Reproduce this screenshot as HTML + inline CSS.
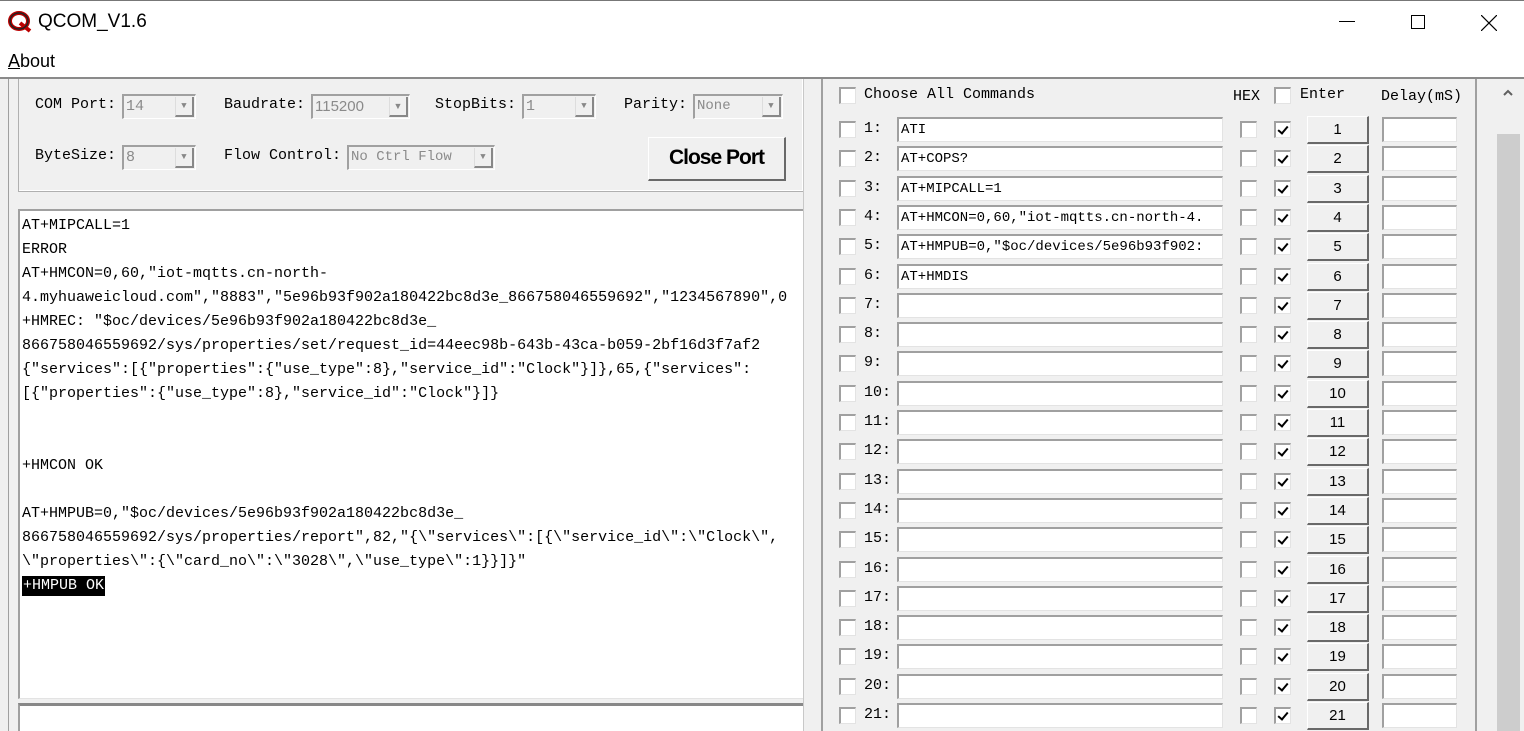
<!DOCTYPE html>
<html><head><meta charset="utf-8"><style>
*{margin:0;padding:0;box-sizing:border-box}
html,body{width:1524px;height:731px;overflow:hidden}
body{background:#f0f0f0;position:relative;font-family:"Liberation Sans",sans-serif}
.abs{position:absolute}
.mono{font-family:"Liberation Mono","Noto Sans CJK SC",monospace}
.sunk{background:#fff;border-top:2px solid #a0a0a0;border-left:2px solid #a0a0a0;border-right:1px solid #e3e3e3;border-bottom:1px solid #e3e3e3}
.cb{position:absolute;width:17px;height:17px;background:#fff;border-top:2px solid #a0a0a0;border-left:2px solid #a0a0a0;border-right:1px solid #e3e3e3;border-bottom:1px solid #e3e3e3}
.ck::after{content:"";position:absolute;left:4px;top:1px;width:4px;height:8px;border-right:2.5px solid #000;border-bottom:2.5px solid #000;transform:rotate(40deg)}
.row{position:absolute;left:0;width:700px;height:25px}
.row .n{position:absolute;left:864px;top:3px;font-size:15px;color:#000}
.row .t{position:absolute;left:897px;top:0;width:326px;height:25px;font-size:14px;line-height:22px;padding-left:2px;white-space:pre;overflow:hidden}
.btn{position:absolute;left:1307px;top:-1px;width:62px;height:28px;background:#f0f0f0;border-top:1px solid #fff;border-left:1px solid #fff;border-right:2px solid #696969;border-bottom:2px solid #696969;text-align:center;font-size:15px;line-height:26px}
.dl{position:absolute;left:1382px;top:0;width:75px;height:25px}
.lbl{position:absolute;font-size:15px;color:#000}
.combo{position:absolute;height:25px;background:#f0f0f0;border-top:2px solid #a0a0a0;border-left:2px solid #a0a0a0;border-right:1px solid #fff;border-bottom:1px solid #fff;color:#8a8a8a;font-size:15px;line-height:21px;padding-left:2px}
.combo i{position:absolute;right:1px;top:1px;width:19px;height:20px;border-left:1px solid #ddd;border-right:2px solid #888;border-bottom:2px solid #888;font-style:normal;font-size:9px;text-align:center;line-height:18px;color:#888}
.log div{position:absolute;left:22px;font-size:15px;white-space:pre;line-height:20px}
</style></head><body>
<div class="abs" style="left:0;top:0;width:1524px;height:77px;background:#fff"></div>
<div class="abs" style="left:0;top:0;width:1524px;height:1px;background:#777"></div>
<svg class="abs" style="left:8px;top:11px" width="26" height="22" viewBox="0 0 26 22"><ellipse cx="11" cy="10" rx="9" ry="8" fill="none" stroke="#b00" stroke-width="4"/><path d="M12 12 L22 20" stroke="#b00" stroke-width="4"/><ellipse cx="11" cy="10" rx="9" ry="8" fill="none" stroke="#222" stroke-width="1.5"/></svg>
<div class="abs" style="left:38px;top:11px;font-size:19px;color:#000">QCOM_V1.6</div>
<div class="abs" style="left:1339px;top:21px;width:16px;height:1px;background:#000"></div>
<div class="abs" style="left:1411px;top:15px;width:14px;height:14px;border:1px solid #000"></div>
<svg class="abs" style="left:1481px;top:15px" width="16" height="16"><path d="M0 0L16 16M16 0L0 16" stroke="#000" stroke-width="1.2"/></svg>
<div class="abs" style="left:8px;top:51px;font-size:18px;color:#000"><u>A</u>bout</div>
<div class="abs" style="left:0;top:77px;width:1524px;height:2px;background:#8a8a8a"></div>
<div class="abs" style="left:18px;top:79px;width:786px;height:113px;border:1px solid #b0b0b0;border-top:none;box-shadow:inset -1px -1px 0 #fff"></div>
<div class="abs" style="left:8px;top:79px;width:1px;height:652px;background:#a0a0a0"></div>
<div class="lbl mono" style="left:35px;top:96px">COM Port:</div>
<div class="combo mono" style="left:122px;top:94px;width:74px">14<i>▼</i></div>
<div class="lbl mono" style="left:224px;top:96px">Baudrate:</div>
<div class="combo" style="left:311px;top:94px;width:99px">115200<i>▼</i></div>
<div class="lbl mono" style="left:435px;top:96px">StopBits:</div>
<div class="combo mono" style="left:522px;top:94px;width:74px">1<i>▼</i></div>
<div class="lbl mono" style="left:624px;top:96px">Parity:</div>
<div class="combo mono" style="left:693px;top:94px;width:90px;font-size:14px">None<i>▼</i></div>
<div class="lbl mono" style="left:35px;top:147px">ByteSize:</div>
<div class="combo mono" style="left:122px;top:145px;width:74px">8<i>▼</i></div>
<div class="lbl mono" style="left:224px;top:147px">Flow Control:</div>
<div class="combo mono" style="left:347px;top:145px;width:148px;font-size:14px">No Ctrl Flow<i>▼</i></div>
<div class="abs" style="left:648px;top:137px;height:44px;width:138px;background:#f0f0f0;border-top:1px solid #fff;border-left:1px solid #fff;border-right:2px solid #696969;border-bottom:2px solid #696969;text-align:center;font-size:21px;line-height:40px;font-weight:bold;letter-spacing:-1px">Close Port</div>
<div class="abs sunk" style="left:18px;top:209px;width:786px;height:490px"></div>
<div class="log mono">
<div style="top:216px">AT+MIPCALL=1</div>
<div style="top:240px">ERROR</div>
<div style="top:264px">AT+HMCON=0,60,"iot-mqtts.cn-north-</div>
<div style="top:288px">4.myhuaweicloud.com","8883","5e96b93f902a180422bc8d3e_866758046559692","1234567890",0</div>
<div style="top:312px">+HMREC: "$oc/devices/5e96b93f902a180422bc8d3e_</div>
<div style="top:336px">866758046559692/sys/properties/set/request_id=44eec98b-643b-43ca-b059-2bf16d3f7af2</div>
<div style="top:360px">{"services":[{"properties":{"use_type":8},"service_id":"Clock"}]},65,{"services":</div>
<div style="top:384px">[{"properties":{"use_type":8},"service_id":"Clock"}]}</div>
<div style="top:456px">+HMCON OK</div>
<div style="top:504px">AT+HMPUB=0,"$oc/devices/5e96b93f902a180422bc8d3e_</div>
<div style="top:528px">866758046559692/sys/properties/report",82,"{\"services\":[{\"service_id\":\"Clock\",</div>
<div style="top:552px">\"properties\":{\"card_no\":\"3028\",\"use_type\":1}}]}"</div>
<div style="top:576px;background:#000;color:#fff;padding:0 1px">+HMPUB OK</div>
</div>
<div class="abs sunk" style="left:18px;top:703px;width:786px;height:28px;border-top:3px solid #888;border-bottom:none"></div>
<div class="abs" style="left:803px;top:79px;width:1px;height:652px;background:#c8c8c8"></div>
<div class="abs" style="left:821px;top:79px;width:2px;height:652px;background:#a0a0a0"></div>
<div class="abs" style="left:1475px;top:79px;width:2px;height:652px;background:#a0a0a0"></div>
<div class="abs" style="left:1477px;top:79px;width:47px;height:652px;background:#f0f0f0"></div>
<div class="abs" style="left:1497px;top:134px;width:23px;height:597px;background:#cdcdcd"></div>
<svg class="abs" style="left:1503px;top:89px" width="10" height="7"><path d="M1 6L5 2L9 6" stroke="#606060" stroke-width="2" fill="none"/></svg>
<div class="cb" style="left:839px;top:87px"></div>
<div class="lbl mono" style="left:864px;top:86px">Choose All Commands</div>
<div class="lbl mono" style="left:1233px;top:88px">HEX</div>
<div class="cb" style="left:1274px;top:87px"></div>
<div class="lbl mono" style="left:1300px;top:86px">Enter</div>
<div class="lbl mono" style="left:1381px;top:88px">Delay(mS)</div>
<div style="position:absolute;left:0;top:0">
<div class="row" style="top:117px"><div class="cb" style="left:839px;top:4px"></div><span class="n mono">1:</span><div class="t sunk mono">ATI</div><div class="cb" style="left:1240px;top:4px"></div><div class="cb ck" style="left:1274px;top:4px"></div><div class="btn">1</div><div class="dl sunk"></div></div>
<div class="row" style="top:146px"><div class="cb" style="left:839px;top:4px"></div><span class="n mono">2:</span><div class="t sunk mono">AT+COPS?</div><div class="cb" style="left:1240px;top:4px"></div><div class="cb ck" style="left:1274px;top:4px"></div><div class="btn">2</div><div class="dl sunk"></div></div>
<div class="row" style="top:176px"><div class="cb" style="left:839px;top:4px"></div><span class="n mono">3:</span><div class="t sunk mono">AT+MIPCALL=1</div><div class="cb" style="left:1240px;top:4px"></div><div class="cb ck" style="left:1274px;top:4px"></div><div class="btn">3</div><div class="dl sunk"></div></div>
<div class="row" style="top:205px"><div class="cb" style="left:839px;top:4px"></div><span class="n mono">4:</span><div class="t sunk mono">AT+HMCON=0,60,"iot-mqtts.cn-north-4.</div><div class="cb" style="left:1240px;top:4px"></div><div class="cb ck" style="left:1274px;top:4px"></div><div class="btn">4</div><div class="dl sunk"></div></div>
<div class="row" style="top:234px"><div class="cb" style="left:839px;top:4px"></div><span class="n mono">5:</span><div class="t sunk mono">AT+HMPUB=0,"$oc/devices/5e96b93f902:</div><div class="cb" style="left:1240px;top:4px"></div><div class="cb ck" style="left:1274px;top:4px"></div><div class="btn">5</div><div class="dl sunk"></div></div>
<div class="row" style="top:264px"><div class="cb" style="left:839px;top:4px"></div><span class="n mono">6:</span><div class="t sunk mono">AT+HMDIS</div><div class="cb" style="left:1240px;top:4px"></div><div class="cb ck" style="left:1274px;top:4px"></div><div class="btn">6</div><div class="dl sunk"></div></div>
<div class="row" style="top:293px"><div class="cb" style="left:839px;top:4px"></div><span class="n mono">7:</span><div class="t sunk mono"></div><div class="cb" style="left:1240px;top:4px"></div><div class="cb ck" style="left:1274px;top:4px"></div><div class="btn">7</div><div class="dl sunk"></div></div>
<div class="row" style="top:322px"><div class="cb" style="left:839px;top:4px"></div><span class="n mono">8:</span><div class="t sunk mono"></div><div class="cb" style="left:1240px;top:4px"></div><div class="cb ck" style="left:1274px;top:4px"></div><div class="btn">8</div><div class="dl sunk"></div></div>
<div class="row" style="top:351px"><div class="cb" style="left:839px;top:4px"></div><span class="n mono">9:</span><div class="t sunk mono"></div><div class="cb" style="left:1240px;top:4px"></div><div class="cb ck" style="left:1274px;top:4px"></div><div class="btn">9</div><div class="dl sunk"></div></div>
<div class="row" style="top:381px"><div class="cb" style="left:839px;top:4px"></div><span class="n mono">10:</span><div class="t sunk mono"></div><div class="cb" style="left:1240px;top:4px"></div><div class="cb ck" style="left:1274px;top:4px"></div><div class="btn">10</div><div class="dl sunk"></div></div>
<div class="row" style="top:410px"><div class="cb" style="left:839px;top:4px"></div><span class="n mono">11:</span><div class="t sunk mono"></div><div class="cb" style="left:1240px;top:4px"></div><div class="cb ck" style="left:1274px;top:4px"></div><div class="btn">11</div><div class="dl sunk"></div></div>
<div class="row" style="top:439px"><div class="cb" style="left:839px;top:4px"></div><span class="n mono">12:</span><div class="t sunk mono"></div><div class="cb" style="left:1240px;top:4px"></div><div class="cb ck" style="left:1274px;top:4px"></div><div class="btn">12</div><div class="dl sunk"></div></div>
<div class="row" style="top:469px"><div class="cb" style="left:839px;top:4px"></div><span class="n mono">13:</span><div class="t sunk mono"></div><div class="cb" style="left:1240px;top:4px"></div><div class="cb ck" style="left:1274px;top:4px"></div><div class="btn">13</div><div class="dl sunk"></div></div>
<div class="row" style="top:498px"><div class="cb" style="left:839px;top:4px"></div><span class="n mono">14:</span><div class="t sunk mono"></div><div class="cb" style="left:1240px;top:4px"></div><div class="cb ck" style="left:1274px;top:4px"></div><div class="btn">14</div><div class="dl sunk"></div></div>
<div class="row" style="top:527px"><div class="cb" style="left:839px;top:4px"></div><span class="n mono">15:</span><div class="t sunk mono"></div><div class="cb" style="left:1240px;top:4px"></div><div class="cb ck" style="left:1274px;top:4px"></div><div class="btn">15</div><div class="dl sunk"></div></div>
<div class="row" style="top:557px"><div class="cb" style="left:839px;top:4px"></div><span class="n mono">16:</span><div class="t sunk mono"></div><div class="cb" style="left:1240px;top:4px"></div><div class="cb ck" style="left:1274px;top:4px"></div><div class="btn">16</div><div class="dl sunk"></div></div>
<div class="row" style="top:586px"><div class="cb" style="left:839px;top:4px"></div><span class="n mono">17:</span><div class="t sunk mono"></div><div class="cb" style="left:1240px;top:4px"></div><div class="cb ck" style="left:1274px;top:4px"></div><div class="btn">17</div><div class="dl sunk"></div></div>
<div class="row" style="top:615px"><div class="cb" style="left:839px;top:4px"></div><span class="n mono">18:</span><div class="t sunk mono"></div><div class="cb" style="left:1240px;top:4px"></div><div class="cb ck" style="left:1274px;top:4px"></div><div class="btn">18</div><div class="dl sunk"></div></div>
<div class="row" style="top:644px"><div class="cb" style="left:839px;top:4px"></div><span class="n mono">19:</span><div class="t sunk mono"></div><div class="cb" style="left:1240px;top:4px"></div><div class="cb ck" style="left:1274px;top:4px"></div><div class="btn">19</div><div class="dl sunk"></div></div>
<div class="row" style="top:674px"><div class="cb" style="left:839px;top:4px"></div><span class="n mono">20:</span><div class="t sunk mono"></div><div class="cb" style="left:1240px;top:4px"></div><div class="cb ck" style="left:1274px;top:4px"></div><div class="btn">20</div><div class="dl sunk"></div></div>
<div class="row" style="top:703px"><div class="cb" style="left:839px;top:4px"></div><span class="n mono">21:</span><div class="t sunk mono"></div><div class="cb" style="left:1240px;top:4px"></div><div class="cb ck" style="left:1274px;top:4px"></div><div class="btn">21</div><div class="dl sunk"></div></div>
</div>
</body></html>
